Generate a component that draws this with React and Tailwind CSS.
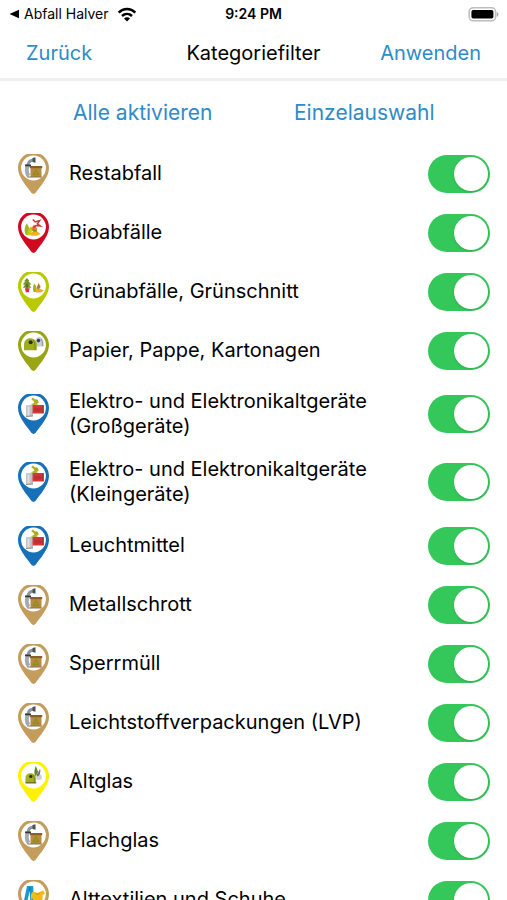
import React, { useState } from 'react';

const categories = [
  { name: 'Restabfall', color: '#c49c5c', art: 'bin' },
  { name: 'Bioabfälle', color: '#cf0a20', art: 'bio' },
  { name: 'Grünabfälle, Grünschnitt', color: '#b9c900', art: 'garden' },
  { name: 'Papier, Pappe, Kartonagen', color: '#9aa516', art: 'domes' },
  { name: 'Elektro- und Elektronikaltgeräte (Großgeräte)', color: '#1871b8', art: 'electro' },
  { name: 'Elektro- und Elektronikaltgeräte (Kleingeräte)', color: '#1871b8', art: 'electro' },
  { name: 'Leuchtmittel', color: '#1871b8', art: 'electro' },
  { name: 'Metallschrott', color: '#c49c5c', art: 'bin' },
  { name: 'Sperrmüll', color: '#c49c5c', art: 'bin' },
  { name: 'Leichtstoffverpackungen (LVP)', color: '#c49c5c', art: 'bin' },
  { name: 'Altglas', color: '#fff100', art: 'glass' },
  { name: 'Flachglas', color: '#c49c5c', art: 'bin' },
  { name: 'Alttextilien und Schuhe', color: '#c49c5c', art: 'textile' },
];

const art = {
  bin: (
    <>
      <path d="M10.8 22c-2.600-2.500-2.600-8-.6-11" fill="none" stroke="#a4abb3" strokeWidth="4" />
      <path d="M10 11c.6-3.600 2.600-5 6-5" fill="none" stroke="#8d959c" strokeWidth="3" />
      <path d="M14.500 4l3-.7v5.400l-3-.6z" fill="#4b5157" />
      <path d="M7 11.400h6" stroke="#34383c" strokeWidth="1.800" />
      <path d="M12.500 12.500h11v10.500h-11z" fill="#b98b3e" />
      <path d="M11.800 12h12.400v2.200H11.800z" fill="#87602a" />
      <path d="M18 16l2.600 4.500h-5.200z" fill="none" stroke="#8f8c1c" strokeWidth="1.300" />
      <path d="M9.500 23h14" stroke="#7b7156" />
    </>
  ),
  bio: (
    <>
      <path d="M8 22c-2.400-4-1.400-8.500.8-11.500 2.600 3.200 3.400 8 1.600 11.500z" fill="#9fb51b" />
      <path d="M9.500 22c-.5-4.500 1.500-7.300 3.800-8.400 1.400 3.400.4 7-1.600 8.800z" fill="#c3cd1c" />
      <path d="M12 22.300c.8-3.500 3.800-5.300 6.600-4.400l4 3c-2.600 1.900-7 2.500-10.600 1.400z" fill="#e9b51b" />
      <path d="M13 15.500l3-4 3.500 4.500-3.500 3.500z" fill="#eb7d24" />
      <path d="M14.800 6.500l2.400 2.500 4.400-1.400-2.200 3.200 3 2.200-4.400-.4-2.600 2.200" fill="none" stroke="#c9353c" strokeWidth="1.500" />
      <path d="M14.500 17l4.500 1" stroke="#7d8e23" strokeWidth="1.400" />
    </>
  ),
  garden: (
    <>
      <path d="M9 6l2.600 3.200h-1.200l3 3.300-2.200.2 2.200 3H4.800l2.200-3-2.200-.2 2.600-3.300H6z" fill="#759329" />
      <path d="M9 12v5" stroke="#485b20" strokeWidth="1.200" />
      <path d="M6.900 16.200h4.800l-.9 4H7.800z" fill="#db303b" />
      <path d="M15.500 20c-1.200-4-.2-6.900 1-8.500 2 2.600 2.600 5.900 1.700 8.500z" fill="#9bb51e" />
      <path d="M17.500 20.300c-.2-3.300 1.800-5.900 4.500-6.300l-.7 2.600 4.500 1.800c-2.200 2-5.600 2.600-8.300 1.900z" fill="#e1b022" />
      <path d="M18.700 15.500l1.900-4.500 2.100 4-2.300 2.500z" fill="#c5722e" />
    </>
  ),
  domes: (
    <>
      <path d="M17 15.500V11c0-3 2-5 4-5s4.500 2 4.500 5v4.500z" fill="#c7cdd6" />
      <path d="M23 8c1.200 1 1.800 4 1.700 7" fill="none" stroke="#8d95a2" />
      <circle cx="20.500" cy="9.600" r="1.800" fill="#33404c" />
      <path d="M6 19.200v-5.500c0-4.200 2.700-6.400 6.200-6.400s6.600 2.200 6.600 6.400v5.500z" fill="#a0ad20" />
      <path d="M15 9c1.600 1.500 2.200 5 2 9.800" fill="none" stroke="#76851a" />
      <circle cx="12.600" cy="11.300" r="2" fill="#29301c" />
    </>
  ),
  electro: (
    <>
      <path d="M14 4.400l4.800 4-3 1.900 4.800 2" fill="none" stroke="#b7b51c" strokeWidth="2.500" />
      <circle cx="18.200" cy="7.300" r="2" fill="#a6ad23" />
      <path d="M8 11.600l7-1v11.600l-7 .8z" fill="#bfc1c5" />
      <path d="M10.500 12.500v9" stroke="#e1e2e4" strokeWidth="2" />
      <path d="M8 22.500l7-.6" stroke="#8e9094" />
      <path d="M14.500 11h11.300v8.500H14.500z" fill="#d33a37" />
      <path d="M16.300 13.500h7.200v4h-7.200z" fill="#c02e2f" />
      <path d="M25 11.500v7.600" stroke="#7e3130" />
    </>
  ),
  glass: (
    <>
      <path d="M18.300 17.800v-3.600c.4-2.300 4.600-4 5.700 1l-.8 2.600z" fill="#cfd2d4" />
      <path d="M17.800 4l2.300 5.800-2.400 4.600c-1.500-2-2-5.300.1-10.400z" fill="#64852b" />
      <path d="M22.200 7l-3.700 6 1 1.500c2.300-1 3.300-4 2.700-7.500z" fill="#6d7377" />
      <path d="M7.500 21v-4.800c0-3.200 2.200-5 5-5s5.400 1.800 5.400 5V21z" fill="#a2af20" />
      <path d="M15 13c1.200 1.800 1.600 4.300 1.500 7.600" fill="none" stroke="#7b881b" />
      <circle cx="12.800" cy="14.400" r="1.600" fill="#29301c" />
      <path d="M7.500 20.800h10.700" stroke="#687126" strokeWidth="1.400" />
    </>
  ),
  textile: (
    <>
      <path d="M9 6h6.200l.5 14h-3.500L11.800 11 9.500 20.500H6z" fill="#169bd3" />
      <path d="M11.900 7v4" stroke="#0c729f" />
      <path d="M15 11.500l4.400 1.500 5.700-2.500 2 3-2.500 1.800V22h-8.500l-1.200-3.500-2 1v-5z" fill="#f2bb18" />
      <path d="M17.500 13c1.500 2 3.200 1.700 4.600-.7" fill="none" stroke="#d68b18" />
    </>
  ),
};

function Pin({ color, type }) {
  return (
    <svg viewBox="0 0 31 40" className="h-10 w-[31px] shrink-0" aria-hidden="true">
      <path d="M15.500-1.500C24-1.500 31 5.400 31 14c0 9.500-9 18.500-13.300 24.800Q15.500 41 13.300 38.800C9 32.500 0 23.500 0 14 0 5.400 7-1.500 15.500-1.500z" fill={color} />
      <circle cx="15.500" cy="14" r="12.400" fill="#fff" />
      {art[type]}
    </svg>
  );
}

function StatusBar() {
  return (
    <div className="grid h-7 shrink-0 grid-cols-3 items-center px-2">
      <div className="flex items-center gap-1 text-sm whitespace-nowrap">
        <svg viewBox="0 0 12 10" className="h-[10px] w-3" aria-hidden="true">
          <path d="M11 .8v8.400L1.500 5z" />
        </svg>
        <span>Abfall Halver</span>
        <svg viewBox="0 0 20 15" className="ml-1 h-[15px] w-5" fill="none" stroke="#000" strokeWidth="2.500" aria-hidden="true">
          <path d="M1.700 5.600c4.700-4.700 11.900-4.700 16.600 0" />
          <path d="M5 9c2.900-2.800 7.100-2.800 10 0" />
          <path d="M10 14.500l-3-3.100c1.700-1.600 4.300-1.600 6 0z" fill="#000" stroke="none" />
        </svg>
      </div>
      <div className="text-center text-sm font-semibold">9:24 PM</div>
      <svg viewBox="0 0 31 15" className="h-[15px] w-[31px] justify-self-end" aria-hidden="true">
        <rect x="1.200" y=".8" width="26.400" height="13" rx="4" fill="#fff" stroke="#bdbdbd" strokeWidth="1.600" />
        <rect x="3.400" y="3" width="22" height="8.600" rx="1.800" />
        <path d="M28.800 5v4.800c2.200-.8 2.200-4 0-4.800z" fill="#a5a5a5" />
      </svg>
    </div>
  );
}

function App() {
  const [active, setActive] = useState(categories.map(() => true));

  const toggle = (index) => {
    setActive(active.map((on, i) => (i === index ? !on : on)));
  };

  return (
    <div className="flex h-screen flex-col bg-white font-['Inter','Liberation_Sans',sans-serif] text-black">
      <StatusBar />

      <header className="grid h-[53px] shrink-0 grid-cols-3 items-center border-b-3 border-[#f0f0f0] px-[26px] text-xl">
        <button className="justify-self-start text-[#2e8bc9]">Zurück</button>
        <h1 className="text-center">Kategoriefilter</h1>
        <button className="justify-self-end text-[#2e8bc9]">Anwenden</button>
      </header>

      <main className="min-h-0 flex-1 overflow-y-auto [scrollbar-width:none]">
        <div className="grid h-[63px] grid-cols-2 items-center px-8 text-[21px] text-[#2e8bc9]">
          <button onClick={() => setActive(categories.map(() => true))}>Alle aktivieren</button>
          <button>Einzelauswahl</button>
        </div>

        <ul>
          {categories.map((cat, i) => (
            <li key={cat.name}>
              <label className="flex min-h-[59px] items-center py-[9px] pr-[17px] pl-[18px]">
                <Pin color={cat.color} type={cat.art} />
                <span className="ml-5 flex-1 pr-12 text-xl leading-[25px]">{cat.name}</span>
                <input
                  type="checkbox"
                  role="switch"
                  checked={active[i]}
                  onChange={() => toggle(i)}
                  className="flex h-[38px] w-[62px] shrink-0 appearance-none items-center rounded-full bg-gray-200 p-[2px] before:size-[34px] before:rounded-full before:bg-white before:shadow-sm before:content-[''] checked:justify-end checked:bg-[#34c759]"
                />
              </label>
            </li>
          ))}
        </ul>
      </main>
    </div>
  );
}

export default App;
